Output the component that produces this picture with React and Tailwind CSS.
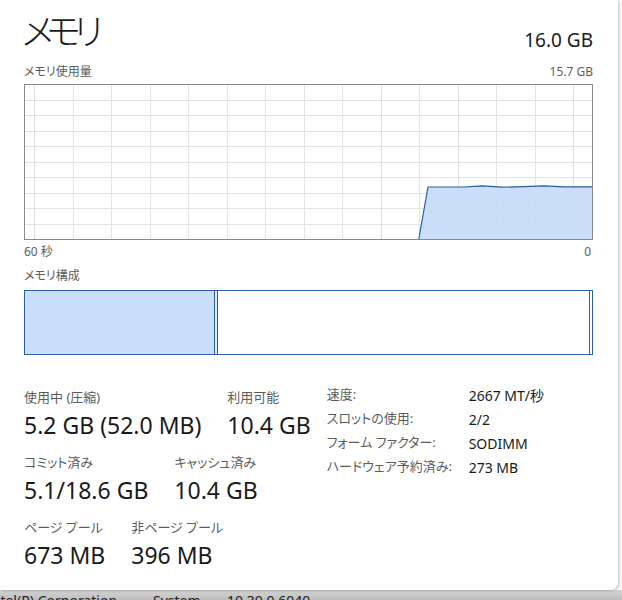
import React from "react";

const font = "font-['Noto_Sans','Noto_Sans_CJK_JP',sans-serif] [font-feature-settings:'palt']";

const vLines = Array.from({ length: 15 }, (_, i) => 10.5 + Math.round(i * 38.5));
const hLines = Array.from({ length: 9 }, (_, i) => 0.5 + Math.round((i + 1) * 15.5));

const usage = [
  [404, 103], [440, 103], [458, 101.8], [478, 103.2], [500, 102.6],
  [520, 101.8], [540, 102.8], [568, 102.8]
];

const UsageGraph = () => {
  const top = usage.map(([x, y]) => `L${x},${y}`).join(" ");
  const area = `M394.7,155.5 ${top} L568,155.5 Z`;
  const line = `M394.7,155.5 ${top}`;
  return (
    <svg width="569" height="156" className="block">
      <rect x="0" y="0" width="569" height="156" fill="#fff" />
      {vLines.map((x) => (
        <line key={"v" + x} x1={x} y1="0" x2={x} y2="156" stroke="#e3e3e3" />
      ))}
      {hLines.map((y) => (
        <line key={"h" + y} x1="0" y1={y} x2="569" y2={y} stroke="#e3e3e3" />
      ))}
      <path d={area} fill="#c3daf7" fillOpacity="0.88" />
      <path d={line} fill="none" stroke="#2a5c9c" strokeWidth="1.2" />
      <rect x="0.5" y="0.5" width="568" height="155" fill="none" stroke="#8a8a8a" />
    </svg>
  );
};

const Stat = ({ label, value }) => (
  <div className="flex flex-col">
    <span className="text-[13px] leading-4 text-[#5c5c5c]">{label}</span>
    <span className="mt-[5px] text-[23px] leading-[30px] text-[#1a1a1a]">{value}</span>
  </div>
);

const details = [
  ["速度:", "2667 MT/秒"],
  ["スロットの使用:", "2/2"],
  ["フォーム ファクター:", "SODIMM"],
  ["ハードウェア予約済み:", "273 MB"]
];

export default function App() {
  return (
    <div className={`w-[622px] h-[600px] overflow-hidden bg-[#f7f7f7] flex flex-col ${font}`}>
      <div className="h-[590px] w-[618px] bg-white rounded-br-[8px] shadow-[1px_1px_3px_rgba(0,0,0,0.2)] pl-6 pr-[25px] pt-[11px] flex flex-col relative z-10">
        {/* header */}
        <div className="flex justify-between items-end">
          <h1 className="-ml-[2px] text-[36px] leading-[41px] font-light tracking-[-7px] text-[#1a1a1a]">メモリ</h1>
          <span className="text-[19px] leading-6 text-[#1a1a1a]">16.0 GB</span>
        </div>

        {/* usage graph */}
        <div className="mt-[12px] flex justify-between text-[12px] leading-4 text-[#5c5c5c]">
          <span>メモリ使用量</span>
          <span>15.7 GB</span>
        </div>
        <div className="mt-[4px]">
          <UsageGraph />
        </div>
        <div className="mt-[4px] flex justify-between text-[12px] leading-4 text-[#5c5c5c]">
          <span>60 秒</span>
          <span className="pr-[2px]">0</span>
        </div>

        {/* composition */}
        <div className="mt-[8px] text-[12px] leading-4 text-[#5c5c5c]">メモリ構成</div>
        <div className="mt-[6px] flex h-[65px] w-[569px]">
          <div className="w-[190px] bg-[#c9defa] border border-r-0 border-[#2b5f9f]" />
          <div className="w-[3px] bg-[#dceafc] border border-r-0 border-[#2b5f9f]" />
          <div className="w-[372px] bg-white border border-r-0 border-[#2b5f9f]" />
          <div className="w-[4px] bg-white border border-[#2b5f9f]" />
        </div>

        {/* stats */}
        <div className="mt-[28px] flex gap-4">
          <div className="pt-[6px] flex flex-col gap-[14px]">
            <div className="flex gap-[26px]">
              <Stat label="使用中 (圧縮)" value="5.2 GB (52.0 MB)" />
              <Stat label="利用可能" value="10.4 GB" />
            </div>
            <div className="flex gap-[26px]">
              <Stat label="コミット済み" value="5.1/18.6 GB" />
              <Stat label="キャッシュ済み" value="10.4 GB" />
            </div>
            <div className="flex gap-[26px]">
              <Stat label="ページ プール" value="673 MB" />
              <Stat label="非ページ プール" value="396 MB" />
            </div>
          </div>
          <div className="grid grid-cols-[142px_auto] auto-rows-[24px] items-center">
            {details.map(([k, v]) => (
              <React.Fragment key={k}>
                <span className="text-[13px] text-[#5c5c5c]">{k}</span>
                <span className="text-[14px] text-[#1a1a1a]">{v}</span>
              </React.Fragment>
            ))}
          </div>
        </div>
      </div>

      {/* strip of the window underneath */}
      <div className="h-[10px] bg-gradient-to-b from-[#d6d6d6] to-[#bdbdbd] overflow-hidden whitespace-nowrap text-[14px] leading-[22px] text-[#1c1c1c] -ml-[13px]">
        <span className="inline-block w-[166px]">Intel(R) Corporation</span>
        <span className="inline-block w-[74px]">System</span>
        <span>10.30.0.6040</span>
      </div>
    </div>
  );
}
